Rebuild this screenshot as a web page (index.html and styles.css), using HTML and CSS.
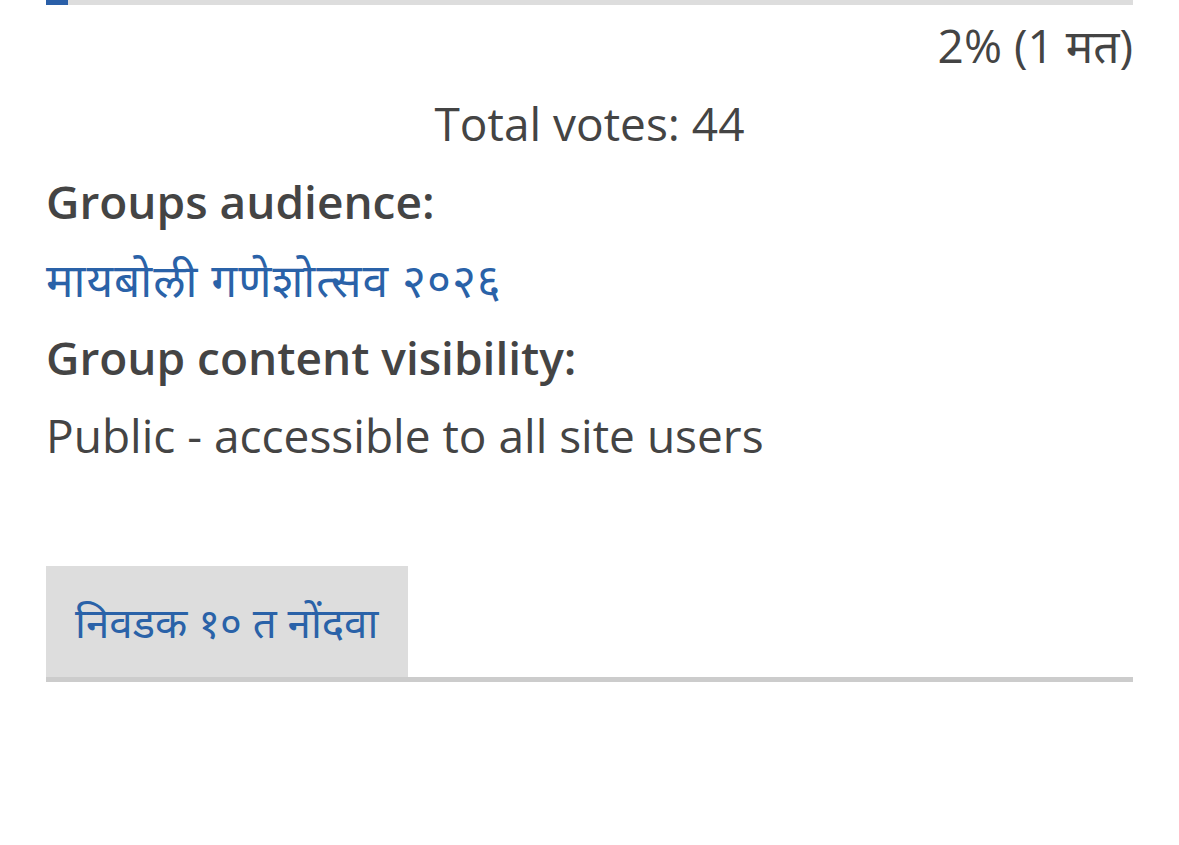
FILE: index.html
```
<!DOCTYPE html>
<html lang="mr">
<head>
    <meta charset="UTF-8">
    <meta name="viewport" content="width=device-width, initial-scale=1.0">
    <title>मायबोली गणेशोत्सव २०२६</title>
    <link rel="stylesheet" href="styles.css">
</head>
<body>
    <div class="container">
        <!-- poll result, last choice -->
        <div class="poll-bar"><div class="poll-fill" style="width: 2%"></div></div>
        <div class="poll-percent">2% (1 मत)</div>
        <div class="poll-total">Total votes: 44</div>

        <div class="field">
            <div class="field-label">Groups audience:</div>
            <div class="field-item"><a href="#" class="group-link">मायबोली गणेशोत्सव २०२६</a></div>
        </div>
        <div class="field">
            <div class="field-label">Group content visibility:</div>
            <div class="field-item">Public - accessible to all site users</div>
        </div>

        <ul class="tabs">
            <li class="active"><a href="#">निवडक १० त नोंदवा</a></li>
        </ul>
    </div>
</body>
</html>
```

FILE: styles.css
```
body {
    margin: 0;
    font-family: 'Open Sans', 'Noto Sans', sans-serif;
    font-size: 46px;
    line-height: 78px;
    color: #444;
    background: #fff;
}
a {
    color: #2a62a8;
    text-decoration: none;
}
.container {
    padding: 0 46px;
}
.poll-bar {
    height: 5px;
    background-color: #dddddd;
    margin-bottom: 1px;
}
.poll-fill {
    height: 100%;
    background-color: #2a5fa8;
}
.poll-percent {
    text-align: right;
}
.poll-total {
    text-align: center;
}
.field-label {
    font-weight: 600;
}
.group-link {
    letter-spacing: 1px;
}
.tabs {
    list-style: none;
    margin: 92px 0 0;
    padding: 0;
    display: flex;
    border-bottom: 5px solid #cccccc;
}
.tabs li a {
    display: block;
    background-color: #dddddd;
    padding: 0 30px 0 29px;
    height: 111px;
    line-height: 111px;
    font-size: 42px;
}
```
